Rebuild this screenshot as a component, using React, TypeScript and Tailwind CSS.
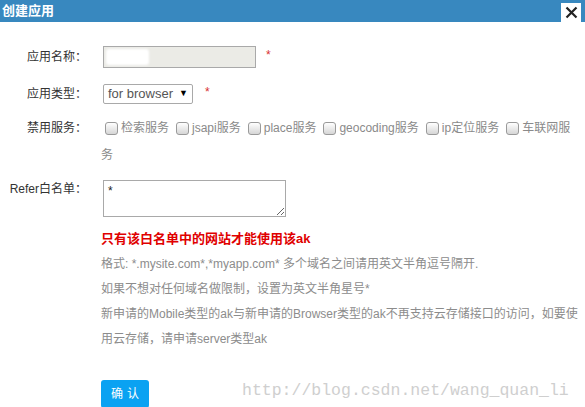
import React from "react";

const font = { fontFamily: '"Liberation Sans", "Noto Sans CJK SC", Arial, sans-serif' };

function Box() {
  return (
    <span className="inline-block w-[13px] h-[13px] rounded-[3px] border border-[#9a9a9a] bg-gradient-to-b from-[#ffffff] to-[#d6d6d6] ml-[2px] mr-[3px] shrink-0" />
  );
}

function Check({ label }: { label: string }) {
  return (
    <span className="inline-flex items-center mr-[5px]">
      <Box />
      <span className="text-[#8a8a8a]">{label}</span>
    </span>
  );
}

export default function App() {
  return (
    <div className="w-[585px] h-[407px] bg-white overflow-hidden text-[12px] text-[#333]" style={font}>
      <div className="h-[22px] bg-[#3888bf] flex items-center justify-between">
        <span className="pl-[2px] text-white font-bold text-[13px] leading-[22px]">创建应用</span>
        <div className="mr-[4px] mt-[3px] w-[20px] h-[19px] bg-white flex items-center justify-center">
          <svg width="13" height="13" viewBox="0 0 13 13">
            <path d="M1.5 1.5 L11.5 11.5 M11.5 1.5 L1.5 11.5" stroke="#222" strokeWidth="2.2" />
          </svg>
        </div>
      </div>

      <div className="pt-[24px]">
        {/* row 1 */}
        <div className="flex items-center h-[22px]">
          <div className="w-[87px] text-right">应用名称：</div>
          <div className="ml-[16px] w-[153px] h-[22px] border border-[#a9a9a9] bg-[#ebebe6] relative">
            <div className="absolute left-[2px] top-[2px] w-[43px] h-[16px] bg-white rounded-[3px] blur-[1px]" />
          </div>
          <span className="ml-[10px] text-[#d83030] text-[12px] -mt-[4px]">*</span>
        </div>

        {/* row 2 */}
        <div className="flex items-center h-[20px] mt-[16px]">
          <div className="w-[87px] text-right">应用类型：</div>
          <div className="ml-[16px] w-[90px] h-[20px] border border-[#a9a9a9] rounded-[2px] flex items-center justify-between pl-[4px] pr-[4px] text-[13px] text-[#555]">
            <span>for browser</span>
            <span className="text-[9px] text-black">▼</span>
          </div>
          <span className="ml-[12px] text-[#d83030] -mt-[4px]">*</span>
        </div>

        {/* row 3 */}
        <div className="flex mt-[11px] leading-[27px]">
          <div className="w-[87px] text-right shrink-0">禁用服务：</div>
          <div className="ml-[16px] flex flex-col">
            <div className="flex items-center whitespace-nowrap">
              <Check label="检索服务" />
              <Check label="jsapi服务" />
              <Check label="place服务" />
              <Check label="geocoding服务" />
              <Check label="ip定位服务" />
              <span className="inline-flex items-center">
                <Box />
                <span className="text-[#8a8a8a]">车联网服</span>
              </span>
            </div>
            <div className="text-[#8a8a8a] -ml-[2px]">务</div>
          </div>
        </div>

        {/* row 4 */}
        <div className="flex mt-[11px]">
          <div className="w-[87px] text-right leading-[18px]">Refer白名单：</div>
          <textarea
            readOnly
            defaultValue="*"
            className="ml-[16px] w-[183px] h-[37px] border border-[#a9a9a9] px-[4px] pt-[2px] text-[12px] text-[#222] leading-[16px] resize-y outline-none"
            style={font}
          />
        </div>

        {/* notes */}
        <div className="ml-[101px] mt-[9px]">
          <div className="text-[13px] font-bold text-[#e00000] leading-[26px]">只有该白名单中的网站才能使用该ak</div>
          <div className="text-[#8c8c8c] leading-[25px] whitespace-nowrap">
            <div>格式: *.mysite.com*,*myapp.com* 多个域名之间请用英文半角逗号隔开.</div>
            <div>如果不想对任何域名做限制，设置为英文半角星号*</div>
            <div>新申请的Mobile类型的ak与新申请的Browser类型的ak不再支持云存储接口的访问，如要使</div>
            <div>用云存储，请申请server类型ak</div>
          </div>
          <div className="flex items-start mt-[28px]">
            <div className="w-[48px] h-[28px] rounded-[3px] bg-[#0aa2f2] text-white text-[12px] flex items-center justify-center tracking-[4px] pl-[4px]">
              确认
            </div>
            <div
              className="ml-[93px] text-[16.5px] leading-[22px] text-[#cfcfcf]"
              style={{ fontFamily: '"Liberation Mono", "DejaVu Sans Mono", monospace' }}
            >
              http://blog.csdn.net/wang_quan_li
            </div>
          </div>
        </div>
      </div>
    </div>
  );
}
